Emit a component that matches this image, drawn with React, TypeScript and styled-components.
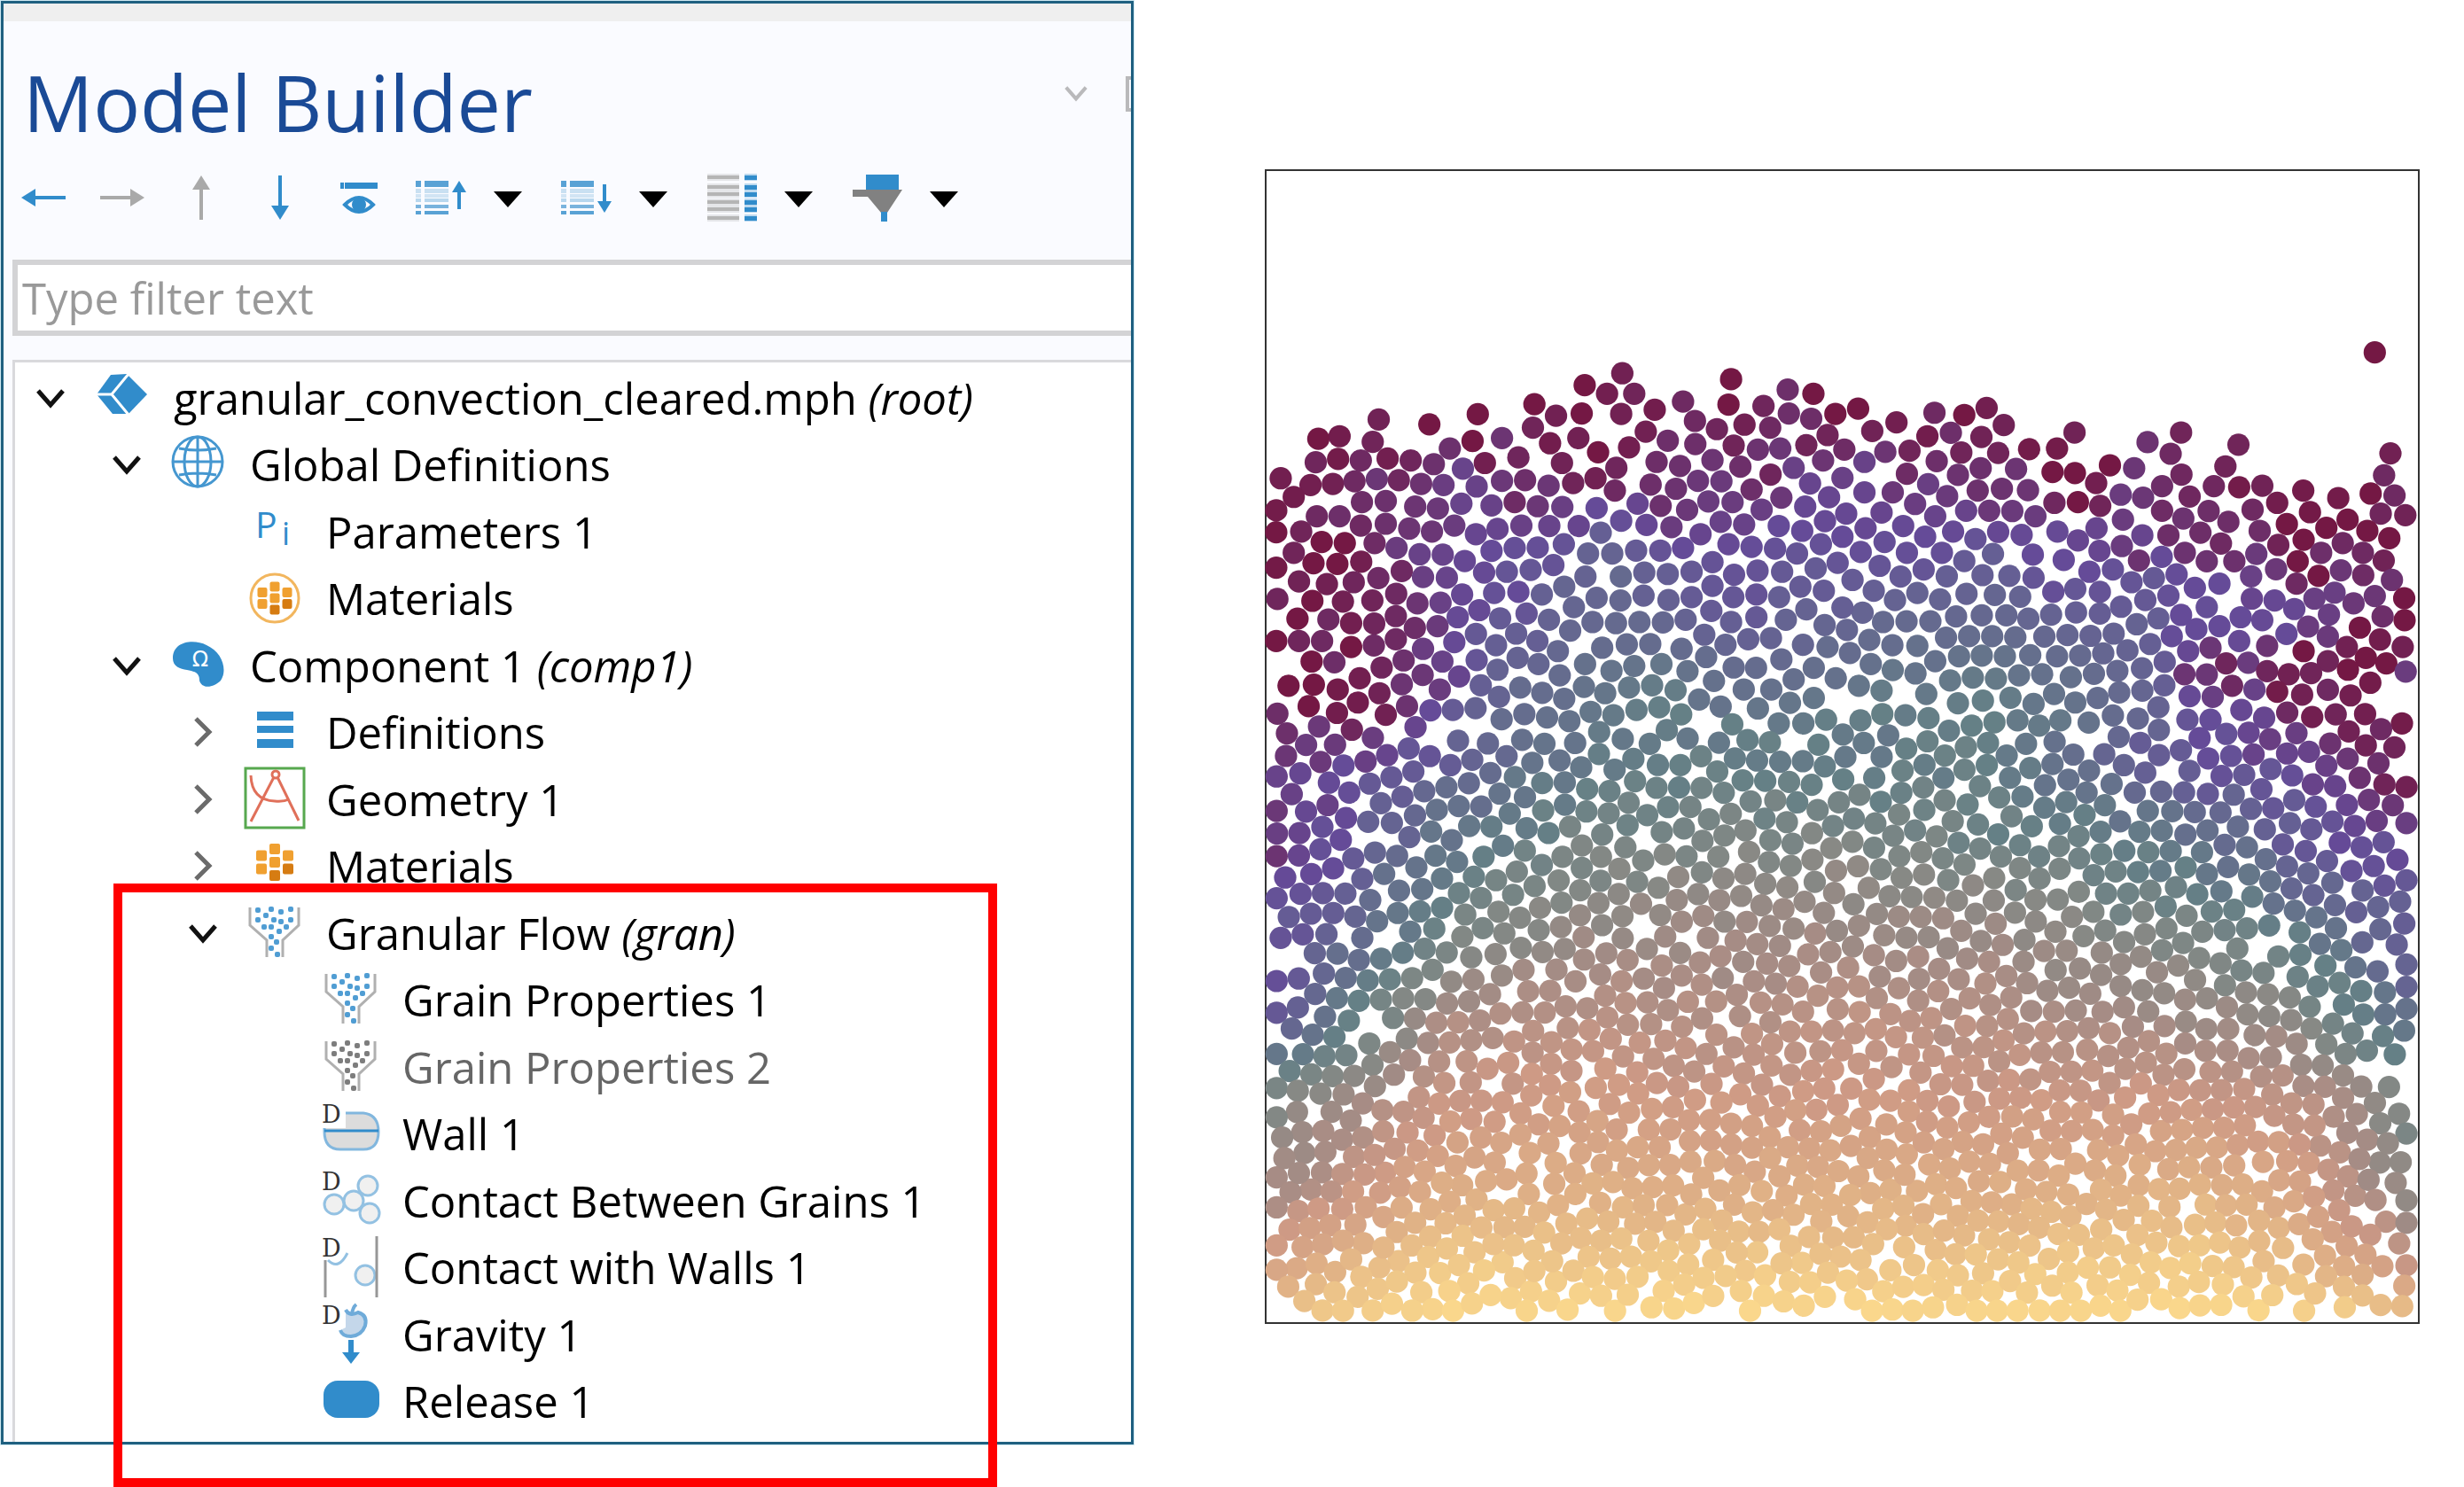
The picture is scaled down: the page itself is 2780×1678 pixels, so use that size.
import React from "react";
import styled, { createGlobalStyle } from "styled-components";

const uiFont = `"Open Sans", "Noto Sans", "Liberation Sans", sans-serif`;
const blue = "#318ccb";
const grey = "#a9a9a9";

const GlobalStyle = createGlobalStyle`
  *, *::before, *::after { box-sizing: border-box; }
  body { margin: 0; background: #ffffff; font-family: ${uiFont}; }
`;

/* ---------- Layout ---------- */

const Page = styled.main`
  position: relative;
  display: grid;
  grid-template-columns: 46fr 54fr;
  align-items: start;
  min-height: 100vh;
  padding: 1px 0 48px 1px;
`;

const Panel = styled.section`
  display: flex;
  flex-direction: column;
  height: calc(100vh - 49px);
  min-height: 1200px;
  overflow: hidden;
  background: #fafbff;
  border: 3px solid #1f6080;
  box-shadow: 0 0 0 1px #cfe8f2;
`;

const TopStrip = styled.div`
  flex: none;
  height: 20px;
  background: #efefef;
`;

const Header = styled.header`
  flex: none;
  display: flex;
  align-items: center;
  justify-content: space-between;
  height: 168px;
  padding-left: 22px;
`;

const Title = styled.h1`
  margin: 0;
  padding-top: 14px;
  font-size: 88px;
  line-height: 120px;
  font-weight: 400;
  color: #1a4a96;
`;

const WindowControls = styled.div`
  display: flex;
  align-items: center;
  gap: 40px;
  padding-bottom: 6px;
`;

const IconButton = styled.button<{ $width: number }>`
  display: flex;
  flex: none;
  align-items: center;
  justify-content: center;
  width: ${(p) => p.$width}px;
  height: 60px;
  padding: 0;
  border: 0;
  background: none;
  cursor: pointer;
`;

const Toolbar = styled.div`
  flex: none;
  display: flex;
  align-items: center;
  height: 62px;
`;

const NavButtons = styled.div`
  display: flex;
  margin-right: 4px;
`;

const SplitButton = styled.div`
  display: flex;
  margin-right: 14px;
`;

const Filter = styled.input`
  flex: none;
  height: 86px;
  margin: 39px 0 27px 10px;
  padding: 0 5px;
  border: 6px solid #d3d3d5;
  border-right: 0;
  border-radius: 0;
  background: #ffffff;
  font-family: ${uiFont};
  font-size: 49px;
  color: #000000;
  outline: none;
  &::placeholder { color: #999999; opacity: 1; }
`;

const Tree = styled.ul`
  flex: 1;
  display: grid;
  grid-auto-rows: 1fr;
  margin: 0 0 0 10px;
  padding: 2px 0 8px;
  list-style: none;
  background: #ffffff;
  border: solid #d9d9dc;
  border-width: 3px 0 0 3px;
`;

const Row = styled.li<{ $depth: number }>`
  display: flex;
  align-items: center;
  min-height: 0;
  padding-left: ${(p) => 12 + p.$depth * 86}px;
`;

const ToggleSlot = styled.span`
  flex: none;
  width: 56px;
  height: 60px;
  margin-right: 15px;
`;

const IconSlot = styled.svg`
  flex: none;
  width: 76px;
  height: 72px;
  margin-right: 20px;
  overflow: visible;
`;

const Label = styled.span<{ $muted?: boolean }>`
  font-size: 49px;
  line-height: 72px;
  white-space: nowrap;
  color: ${(p) => (p.$muted ? "#666666" : "#000000")};
`;

const Highlight = styled.div`
  position: absolute;
  left: 128px;
  top: 997px;
  bottom: 0;
  width: 997px;
  border: 10px solid #ff0000;
  pointer-events: none;
`;

const PlotArea = styled.section`
  padding: 190px 50px 0 148px;
`;

const Plot = styled.svg`
  display: block;
  width: 100%;
  aspect-ratio: 1;
  border: 2px solid #333333;
  overflow: visible;
`;

/* ---------- Toolbar icons ---------- */

const ArrowIcon = ({ angle, color, length }: { angle: number; color: string; length: number }) => (
  <svg width="52" height="52" viewBox="-26 -26 52 52">
    <g transform={`rotate(${angle})`} fill={color}>
      <rect x={-length / 2} y="-2" width={length - 10} height="4" />
      <path d={`M${length / 2} 0 L${length / 2 - 16} -10 V10 Z`} />
    </g>
  </svg>
);

const EyeIcon = () => (
  <svg width="44" height="40" viewBox="0 0 44 40">
    <rect x="1" y="3" width="4" height="7" fill={blue} />
    <rect x="6" y="3" width="37" height="7" fill={blue} />
    <path d="M6 28 Q22 12 38 28 Q22 44 6 28Z" fill="none" stroke={blue} strokeWidth="4" />
    <circle cx="22" cy="28" r="8" fill={blue} />
  </svg>
);

const ListIcon = ({ up }: { up: boolean }) => (
  <svg width="58" height="44" viewBox="0 0 58 44">
    {[[3, 7, 1], [12, 5, 0.3], [18, 4, 0.25], [23, 4, 0.4], [30, 4, 0.8], [37, 4, 1]].map(([y, h, o]) => (
      <g key={y} fill={blue} opacity={o * 0.8}>
        <rect x="0" y={y} width="6" height={h} />
        <rect x="10" y={y} width="27" height={h} />
      </g>
    ))}
    <g transform={up ? undefined : "matrix(1 0 0 -1 0 42)"} fill={blue}>
      <path d="M49 3 L57 16 H41Z" />
      <rect x="47" y="12" width="4" height="23" />
    </g>
  </svg>
);

const ColumnsIcon = () => (
  <svg width="56" height="54" viewBox="0 0 56 54">
    {[1, 12, 20, 29, 37, 47].map((y) => (
      <g key={y}>
        <rect x="0" y={y + 1} width="36" height="4" fill="#b5b5b5" />
        <rect x="0" y={y - 1} width="36" height="8" fill="#b5b5b5" opacity="0.3" />
        <rect x="42" y={y - 1} width="14" height="8" fill={blue} opacity="0.3" />
        <rect x="42" y={y + 1} width="14" height="5" fill={blue} />
      </g>
    ))}
  </svg>
);

const FunnelIcon = () => (
  <svg width="56" height="54" viewBox="0 0 56 54">
    <rect x="15" y="1" width="37" height="20" fill={blue} />
    <path d="M0 18 H56 L39 44 H32 L17 26 H0Z" fill="#818181" />
    <rect x="32" y="43" width="7" height="11" fill={blue} />
  </svg>
);

const Caret = () => (
  <svg width="32" height="24" viewBox="0 0 32 24">
    <path d="M0 5 H32 L16 23Z" fill="#000" />
  </svg>
);

const Chevron = ({ open, color }: { open: boolean; color: string }) => (
  <svg width="40" height="40" viewBox="-20 -20 40 40">
    <path
      d={open ? "M-14 -8 L0 8 L14 -8" : "M-8 -15 L7 0 L-8 15"}
      fill="none"
      stroke={color}
      strokeWidth="5"
    />
  </svg>
);

/* ---------- Tree icons ---------- */

const Badge = () => (
  <text x="5" y="24" fontFamily='"DejaVu Serif", serif' fontSize="27" fill="#333">
    D
  </text>
);

const grains = [
  [19, 10], [34, 9], [45, 12], [56, 9], [28, 16], [19, 21], [37, 21], [45, 23], [56, 21],
  [26, 29], [34, 29], [51, 29], [43, 34], [34, 40], [40, 46], [34, 53], [41, 60],
];

const GrainFunnel = ({ color }: { color: string }) => (
  <>
    <path d="M10 7 V27 L29 44 V63 M65 7 V27 L47 44 V63" fill="none" stroke="#b0b0b0" strokeWidth="3" />
    {grains.map(([x, y]) => (
      <rect key={`${x}-${y}`} x={x - 3} y={y - 3} width="6" height="6" rx="2" fill={color} opacity="0.85" />
    ))}
  </>
);

const Cells = ({ cx, cy, dx, dy, size }: { cx: number; cy: number; dx: number; dy: number; size: number }) => (
  <>
    {[
      [0, -dy, "#f0a030"], [0, 0, "#f0a030"], [0, dy, "#d67c12"],
      [-dx, -dy / 2, "#f0a030"], [-dx, dy / 2, "#f0a030"],
      [dx, -dy / 2, "#f0a030"], [dx, dy / 2, "#d67c12"],
    ].map(([x, y, fill], i) => (
      <rect
        key={i}
        x={cx + Number(x) - size / 2}
        y={cy + Number(y) - size / 2}
        width={size}
        height={size}
        rx="2"
        fill={String(fill)}
      />
    ))}
  </>
);

const ball = { fill: "#f0f0f0", stroke: "#93c1e2", strokeWidth: 3 };

const icons: Record<string, React.ReactNode> = {
  root: (
    <>
      <path d="M9 32 L25 10 L43 9 L66 32 L45 54 H27Z" fill={blue} />
      <path d="M8 32 H26 L45 9 M26 32 L45 55" fill="none" stroke="#fff" strokeWidth="3" />
    </>
  ),
  globe: (
    <g fill="none" stroke={blue} strokeWidth="3" opacity="0.9">
      <circle cx="37" cy="33" r="28" />
      <ellipse cx="37" cy="33" rx="15" ry="28" />
      <path d="M37 5 V61 M9 33 H65 M16 18 Q37 22 58 18 M16 48 Q37 44 58 48" />
    </g>
  ),
  params: (
    <g fill={blue} fontFamily='"Open Sans", sans-serif'>
      <text x="16" y="43" fontSize="41">P</text>
      <text x="46" y="51" fontSize="36">i</text>
    </g>
  ),
  materialsRound: (
    <>
      <circle cx="38" cy="36" r="27" fill="none" stroke="#f2b65e" strokeWidth="3" />
      <Cells cx={38} cy={36} dx={14} dy={13} size={11} />
    </>
  ),
  component: (
    <>
      <path d="M9 28 C9 8 33 6 47 13 C65 21 71 41 63 53 C55 61 42 63 39 53 C39 43 33 43 25 41 C17 40 9 37 9 28Z" fill={blue} />
      <text x="40" y="37" fontSize="24" textAnchor="middle" fontFamily='"DejaVu Sans", sans-serif' fill="#fff">
        Ω
      </text>
    </>
  ),
  definitions: (
    <g fill={blue}>
      <rect x="18" y="13" width="41" height="10" />
      <rect x="18" y="29" width="41" height="8" />
      <rect x="18" y="44" width="41" height="10" />
    </g>
  ),
  geometry: (
    <>
      <rect x="5" y="1" width="66" height="67" fill="#fff" stroke="#57a84f" strokeWidth="3" />
      <g fill="none" stroke="#e0705a" strokeWidth="3">
        <path d="M11 61 L37 11 M41 11 L65 60 M11 9 Q12 37 38 38 Q48 39 54 36" />
        <circle cx="39" cy="8" r="4" />
      </g>
    </>
  ),
  materials: <Cells cx={38} cy={32} dx={15} dy={15} size={12} />,
  grain: <GrainFunnel color={blue} />,
  grainOff: <GrainFunnel color="#666" />,
  wall: (
    <>
      <path d="M32 13 H52 Q69 15 69 34 Q69 54 52 54 H26 Q8 54 8 34 V30 H32Z" fill="#dcdcdc" />
      <path d="M32 13 H52 Q69 15 69 34 Q69 54 52 54 H26 Q8 54 8 34 V30" fill="none" stroke="#82b7de" strokeWidth="3" />
      <path d="M8 33 H69" stroke={blue} strokeWidth="3" />
      <Badge />
    </>
  ),
  contactGrains: (
    <>
      <circle cx="41" cy="36" r="11" {...ball} />
      <circle cx="57" cy="19" r="11" {...ball} />
      <circle cx="19" cy="40" r="11" {...ball} />
      <circle cx="59" cy="50" r="11" {...ball} />
      <Badge />
    </>
  ),
  contactWalls: (
    <>
      <circle cx="54" cy="45" r="11" {...ball} />
      <path d="M12 28 Q24 40 34 20" fill="none" stroke="#93c1e2" strokeWidth="3" />
      <path d="M67 1 V70 M9 28 V70" stroke="#979797" strokeWidth="3" />
      <Badge />
    </>
  ),
  gravity: (
    <>
      <path d="M32 12 Q40 16 46 11 Q57 14 54 26 Q50 38 38 38 Q28 38 26 31 L32 28Z" fill="#c4d7ea" />
      <path d="M32 8 Q36 16 46 11 Q57 14 54 26 Q50 37 38 38 Q28 38 26 31 M39 13 Q40 5 44 2" fill="none" stroke="#6fabd9" strokeWidth="4" />
      <path d="M35 42 H41 V56 H48 L38 69 L28 56 H35Z" fill={blue} />
      <Badge />
    </>
  ),
  release: <rect x="7" y="13" width="63" height="42" rx="16" fill={blue} />,
};

interface Node {
  depth: number;
  icon: string;
  text: string;
  tag?: string;
  state?: "open" | "closed";
  muted?: boolean;
}

const nodes: Node[] = [
  { depth: 0, icon: "root", text: "granular_convection_cleared.mph", tag: "(root)", state: "open" },
  { depth: 1, icon: "globe", text: "Global Definitions", state: "open" },
  { depth: 2, icon: "params", text: "Parameters 1" },
  { depth: 2, icon: "materialsRound", text: "Materials" },
  { depth: 1, icon: "component", text: "Component 1", tag: "(comp1)", state: "open" },
  { depth: 2, icon: "definitions", text: "Definitions", state: "closed" },
  { depth: 2, icon: "geometry", text: "Geometry 1", state: "closed" },
  { depth: 2, icon: "materials", text: "Materials", state: "closed" },
  { depth: 2, icon: "grain", text: "Granular Flow", tag: "(gran)", state: "open" },
  { depth: 3, icon: "grain", text: "Grain Properties 1" },
  { depth: 3, icon: "grainOff", text: "Grain Properties 2", muted: true },
  { depth: 3, icon: "wall", text: "Wall 1" },
  { depth: 3, icon: "contactGrains", text: "Contact Between Grains 1" },
  { depth: 3, icon: "contactWalls", text: "Contact with Walls 1" },
  { depth: 3, icon: "gravity", text: "Gravity 1" },
  { depth: 3, icon: "release", text: "Release 1" },
];

/* ---------- Grain plot ---------- */

const SIZE = 3090;
const RADIUS = 30;

/* Upper grains of each half of the box: x, y, level on the colour scale. */
const upperLeft = `977,571,10.5 876,603,11 936,626,10.6 1009,626,10.3 741,654,11 799,685,10.5 868,679,11 974,680,10.5 1064,669,10.7 1140,647,10 1269,587,11 1262,655,11 1421,615,9.7 1490,626,11 1356,659,10.2 1424,679,9.7 1484,693,9.8 1549,680,11 323,695,10.4 459,708,11 589,681,11 218,740,10.7 161,747,11 307,755,10.3 575,753,11 654,745,9.4 737,717,10.3 783,759,10.7 859,745,10.5 1040,728,10.5 1099,752,9.7 1172,699,10 1231,721,10.2 1305,709,10.5 1374,717,10 1528,737,10.3 514,773,9.6 698,797,10.2 912,783,11 995,770,10.6 1173,761,9.7 1276,765,10.3 1341,776,9.5 1401,773,9.3 1471,764,10.3 154,810,10.2 214,801,10.8 275,805,10 347,800,10.6 409,805,10.2 471,815,9.6 549,827,8.5 608,812,10.6 815,812,10.4 961,825,10.2 1069,809,9.8 1132,820,9.6 1219,804,9.4 1294,822,9.7 1375,843,10.2 1437,825,8.7 1516,805,9.4 60,853,10.6 140,871,10.6 200,868,10.5 258,861,10 318,855,9.3 377,858,10.1 437,868,9.5 497,871,8.9 586,875,8.6 654,860,9.2 716,858,9.7 779,873,9.3 845,866,10.3 905,853,10.5 957,886,10 1053,870,9.7 1121,881,9.5 1180,860,9.2 1243,861,9.1 1324,883,9.7 1481,867,8.4 95,903,10.7 48,939,10.8 48,998,11 278,917,9.8 342,914,9.6 157,955,10 218,955,9.7 421,929,9.4 482,934,9.2 545,921,8.5 626,926,8.6 688,917,9.9 750,928,9.3 816,930,8.8 908,933,8 1018,921,8.3 1080,927,9.6 1151,938,9.2 1208,915,9 1273,917,9 1351,937,8.8 1404,905,9.2 1468,929,8.2 1532,904,8.3 275,980,10 342,975,9.6 405,988,9.4 466,996,9.3 526,980,9 584,1003,8.3 642,989,8.4 706,980,8.7 781,981,8.5 860,981,8.4 919,999,7 974,967,7.8 1042,978,8.2 1109,984,9 1187,1003,8.4 1241,970,8.6 1304,977,8.6 1397,981,8 1460,994,8 1521,968,8.1 115,996,10.3 170,1024,11 232,1027,11 312,1027,9.9 95,1053,10.3 371,1040,9 433,1057,8.6 495,1058,8.5 554,1075,8.2 626,1048,8 688,1040,7.8 750,1039,7.8 820,1030,7.6 885,1055,6.8 950,1055,6.7 1014,1047,7.2 1079,1047,7.6 1140,1040,8 1262,1030,8.1 1324,1037,7.9 1387,1042,7.7 1446,1055,7.5 1510,1030,7.7 48,1093,10.9 148,1081,11 212,1083,11 276,1077,10.6 385,1102,10 442,1118,8.8 506,1120,8.5 606,1106,8.1 667,1104,7.5 731,1099,7.4 792,1086,7.6 878,1117,6.8 973,1117,6.4 1036,1106,6.9 1099,1110,7 1163,1104,7.3 1219,1078,7.6 1277,1112,7.6 1340,1101,7.6 1406,1104,7.3 1496,1095,7.2 1555,1080,7.5 109,1130,10.4 184,1137,10.5 256,1132,10.2 322,1121,9.9 51,1177,10.2 145,1182,11 227,1184,10.5 306,1181,10.3 370,1163,10 427,1189,9.4 489,1187,8.7 547,1165,8.2 633,1161,7.7 698,1158,8 761,1165,6.9 821,1144,6.6 847,1199,6.6 908,1174,6.6 972,1181,6.5 1034,1168,6.9 1101,1180,6.9 1163,1172,7.2 1219,1142,7.4 1275,1172,7.4 1337,1165,7.6 1398,1172,7 1455,1144,7.2 1518,1155,7.2 105,1230,11 188,1232,10 249,1242,10.6 311,1243,10.2 369,1223,10 420,1255,9.8 481,1250,9.1 535,1226,8.1 593,1207,8.1 649,1229,7.2 720,1216,7.5 780,1233,6.8 837,1262,6.5 897,1239,6.5 960,1242,6.4 1023,1239,6.4 1086,1240,6.5 1147,1233,6.8 1216,1209,7.2 1269,1239,7 1337,1226,7.3 1416,1233,6.7 1471,1205,6.8 1520,1247,6.6 48,1290,11 109,1290,10.2 171,1290,10 249,1306,11 310,1302,9.9 369,1285,10 442,1311,8.9 526,1293,8.1 584,1271,7.3 638,1301,7 692,1270,7 749,1290,7 804,1317,6.5 923,1308,6.3 989,1299,6.3 1052,1298,6.3 1136,1311,6.3 1197,1273,6.8 1254,1300,6.6 1315,1285,6.9 1376,1282,6.8 1462,1300,6.6 1528,1306,6.2 143,1345,11 204,1347,9.8 331,1361,10.2 390,1342,9.6 494,1345,8.6 586,1341,7.5 642,1367,6.8 696,1335,6.8 752,1352,6.6 809,1382,6.3 877,1352,6 948,1370,5.8 1009,1357,5.8 1082,1352,5.6 1152,1371,5.9 1202,1333,6.2 1276,1361,6.3 1336,1362,6.3 1404,1339,6.4 1491,1362,6.1 81,1410,11 149,1407,11 213,1420,10.8 272,1390,10.6 325,1430,10.4 385,1406,9.4 441,1381,9.3 539,1385,8.4 597,1409,7 487,1420,9 646,1440,6.7 703,1415,6.3 762,1429,6.2 821,1445,6.1 874,1413,5.9 931,1430,5.7 995,1415,5.5 1057,1409,5.3 1120,1422,5.2 1183,1447,5.8 1223,1397,6 1303,1420,6 1377,1420,6 1437,1393,6.1 1491,1443,5.6 1550,1390,6 135,1465,11 51,1485,9.8 267,1455,10.7 211,1483,10.7 342,1488,10.5 399,1465,9.5 462,1476,8 522,1475,7.2 583,1470,6.8 653,1500,6.2 714,1486,6.2 775,1495,6 835,1505,5.9 892,1480,5.6 953,1489,5.4 1015,1475,5.2 1076,1468,5.1 1135,1487,5 1241,1466,5.9 1341,1471,5.7 1427,1456,5.7 1397,1511,5.5 1463,1511,5.4 1524,1501,5.1`;

const upperRight = `1429,515,11 42,666,11 145,703,10.6 80,726,10.4 247,677,10 327,683,11 387,664,10.6 433,710,10.4 228,740,10.7 291,731,9.7 373,742,10.4 501,775,10.8 576,773,10.8 623,730,10.4 718,818,11 819,756,9.5 909,730,10.3 1063,763,10.3 881,787,10 1028,821,10.3 1471,786,10.5 1454,845,10 5,776,9.9 59,809,8.6 115,782,9.4 180,779,10.3 253,807,9.7 319,784,10.3 418,785,10.3 173,841,9.9 310,844,9.5 371,826,9.6 466,828,9.4 564,836,11 624,839,11 681,866,10.6 783,826,9.3 910,843,10.1 858,874,9.8 997,874,10.1 1065,877,10.8 1127,873,10.4 1237,886,10.8 1167,919,10.7 1331,906,10.8 1418,894,11 1482,899,10 0,852,8.7 59,891,8.4 135,891,9.2 230,869,8.8 281,901,9.1 363,886,9.6 428,881,9.5 498,885,9.4 569,919,10.1 632,917,11 692,927,10.3 747,897,9 807,905,9.3 932,902,10.1 858,940,9.9 983,941,9.8 1101,937,10 1255,944,10.9 1356,964,11 1445,948,10.2 1511,952,10.4 195,922,8.9 105,945,8.4 10,948,8.2 249,955,8.5 332,940,8.5 394,940,9.2 456,941,9.1 518,955,9 753,964,9 915,961,9.5 1036,970,9.8 1193,976,11 1299,986,11 1409,994,11 1468,1014,11 62,987,8.2 163,981,8.1 682,987,8.4 577,996,8.1 632,1020,8.3 805,1006,8.4 875,1006,9.8 961,999,9.8 1120,994,9.8 1238,1018,11 1343,1027,10 1397,1053,10 222,1010,8 297,996,8.1 357,1016,7.6 418,997,8.2 481,1005,8.1 113,1024,7.8 0,1010,8 1016,1028,10 1170,1032,10.4 750,1035,9 690,1048,8.3 919,1053,9.5 1111,1056,9.1 1285,1053,9.7 1453,1074,10.4 1222,1076,11 49,1051,7.8 173,1053,7.8 267,1053,7.8 404,1056,7 511,1058,8 594,1072,8 796,1074,9.5 857,1064,8 978,1076,9.5 1052,1076,9.6 327,1075,7.2 100,1088,7.5 218,1098,7.5 726,1098,7.7 663,1104,8 1338,1100,9.3 1164,1097,9.2 1278,1115,11 1398,1113,9.9 1475,1126,9.5 27,1126,7.2 156,1117,7.2 280,1116,7 376,1113,7 448,1115,7 513,1120,7.5 776,1132,7.5 836,1121,7.3 897,1111,7.9 946,1147,8 1012,1136,8 1097,1116,8.7 1219,1136,10 84,1155,7 201,1161,6.8 333,1163,6.8 566,1158,7.8 625,1150,7.4 691,1158,7.6 1321,1160,8.8 1429,1169,9.3 1508,1175,11 141,1180,6.8 262,1178,6.7 409,1166,6.6 477,1171,6.7 813,1180,7.3 875,1168,7.7 1099,1176,8.4 1160,1181,8.2 1267,1176,8.8 748,1198,7.2 978,1199,7.8 1213,1204,8.2 1372,1189,9.2 54,1214,6.7 1450,1224,9.7 1509,1234,11 0,1200,7 305,1224,6.5 374,1221,6.5 440,1221,6.5 499,1230,6.6 560,1219,6.8 627,1213,7 691,1216,7.1 848,1229,7 909,1220,8 1069,1226,8 1127,1234,8.1 1306,1219,8.8 109,1239,6.4 172,1237,6.4 236,1237,6.4 790,1245,6.8 950,1258,8 1012,1250,8 1250,1251,9 1389,1254,11 12,1260,6.6 72,1287,6.3 278,1281,6.3 340,1277,6.2 402,1277,6.2 464,1280,6.3 542,1278,6.5 604,1274,6.6 666,1276,6.8 728,1270,6.8 884,1277,7.9 1192,1271,8 1303,1278,9.1 1443,1286,10.7 134,1301,6.2 201,1303,6 826,1298,7 765,1315,6.8 988,1308,9.3 1065,1290,8.1 1140,1303,9.4 1354,1306,10.5 1504,1306,10.5 928,1317,8.2 1238,1317,11 20,1322,6.3 313,1331,5.9 374,1329,5.8 436,1331,5.9 504,1328,6.1 576,1331,6.3 638,1329,6.4 700,1323,6.6 249,1344,6 76,1352,6 135,1368,5.6 196,1377,5.8 865,1346,7.2 804,1363,6.7 738,1370,6.5 675,1378,6.3 613,1387,6 536,1379,6 474,1382,5.8 412,1391,5.4 350,1388,5.4 289,1396,5.5 1030,1350,10.2 1089,1348,9 1405,1335,11 1303,1344,10.3 1460,1350,11 1357,1367,11 1512,1372,9 1140,1371,10.2 1258,1376,10.3 1198,1379,10.5 978,1380,9.3 918,1379,9.4 44,1410,5.7 105,1423,5.3 225,1432,5.5 864,1409,7 805,1423,6.6 743,1428,6.4 1046,1410,10 1417,1402,10.8 1106,1420,8.6 1167,1426,10.8 1303,1421,10 1234,1434,10.5 1364,1436,10.6 932,1438,8.1 994,1440,8.8 568,1432,5.8 685,1443,6.2 625,1455,5.9 451,1442,5.3 377,1450,5.1 310,1457,5.2 513,1459,5.6 848,1468,6.8 1071,1475,8.2 1194,1482,10 1403,1486,10.6 1324,1487,10.3 1132,1496,8.3 1261,1494,10.6 107,1486,5 169,1489,5.3 231,1497,5.1 726,1490,6.3 793,1498,6.5 585,1503,5.5 661,1509,5.9 470,1503,5.4 408,1508,5 347,1517,5 926,1501,7.5 988,1501,7.9 1502,1511,10.8`;

/* Colour scale, from slow (bottom) to fast (top). */
const scale = [
  [251, 217, 140], [223, 176, 134], [205, 153, 133], [166, 140, 133], [130, 136, 133], [101, 128, 134],
  [101, 113, 140], [101, 95, 148], [101, 75, 152], [106, 60, 126], [110, 42, 98], [116, 24, 68],
];

/* Scale level sampled over the box, in 1300-unit coordinates. */
const gridX = [0, 100, 200, 350, 500, 650, 800, 950, 1050, 1150, 1230, 1300];
const gridY = [500, 600, 680, 760, 860, 960, 1050, 1150, 1230, 1300];
const levels = [
  [10.7, 10.3, 8.4, 6.5, 6.3, 6.8, 6.3, 7, 8, 8.6, 10, 11],
  [9.8, 11, 8.3, 6, 5.3, 5.7, 5.2, 6.3, 8, 10.2, 11, 10.8],
  [9, 8, 6.6, 5.3, 5, 5, 5, 6.3, 7.3, 7.8, 9.7, 10.5],
  [9.5, 7.3, 5.7, 4.4, 4.1, 4, 4.5, 5, 5.6, 7, 7.8, 8.2],
  [7.6, 6.3, 4.4, 3.4, 3.3, 3.2, 3.3, 4, 4.2, 5.2, 6.2, 7.2],
  [7.8, 5, 2.9, 2.4, 2.7, 2.4, 2.6, 2.9, 3.2, 3.5, 4.8, 6.3],
  [4, 3.1, 2.1, 1.8, 2, 1.9, 2, 2, 2, 2.3, 3.1, 4.6],
  [3.2, 2, 1.1, 1, 1.1, 1.1, 1.1, 1, 0.9, 1.3, 2.6, 4],
  [1.7, 0.8, 0.35, 0.5, 0.4, 0.5, 0.5, 0.4, 0.35, 0.7, 1.4, 2.3],
  [0.4, 0.2, 0, 0, 0, 0, 0, 0, 0, 0, 0.1, 0.3],
];

/* Loose pockets in the bed: x, y, radius. */
const voids = [
  [30, 1640, 40], [260, 1800, 80], [40, 2330, 80], [250, 2300, 60], [840, 2430, 60], [1220, 2445, 50],
  [3060, 1560, 60], [2680, 2080, 100], [2980, 2420, 90], [2300, 1800, 70], [2720, 2440, 50],
  [1660, 2530, 70], [2010, 2910, 50], [2880, 2030, 80], [680, 1900, 60], [1000, 1780, 70], [1650, 1620, 70],
  [120, 2150, 60], [340, 1880, 50], [990, 3010, 46], [1740, 3040, 40], [2760, 2940, 50], [60, 3060, 50],
  [500, 2400, 50], [700, 2240, 50], [360, 2480, 50], [340, 2760, 40], [2960, 2800, 40], [3070, 3060, 40],
  [780, 2700, 40], [1290, 2600, 40], [1280, 2720, 40], [2440, 2760, 40], [2040, 2430, 40], [1770, 2380, 50],
];

const locate = (axis: number[], v: number): [number, number] => {
  let i = 0;
  while (i < axis.length - 2 && v > axis[i + 1]) i++;
  const f = (v - axis[i]) / (axis[i + 1] - axis[i]);
  return [i, Math.max(0, Math.min(1, f))];
};

const levelAt = (x: number, y: number) => {
  const [i, fx] = locate(gridX, (x / SIZE) * 1300);
  const [j, fy] = locate(gridY, (y / SIZE) * 1300);
  const top = levels[j][i] * (1 - fx) + levels[j][i + 1] * fx;
  const bottom = levels[j + 1][i] * (1 - fx) + levels[j + 1][i + 1] * fx;
  return top * (1 - fy) + bottom * fy;
};

const colorOf = (level: number) => {
  const v = Math.max(0, Math.min(scale.length - 1, level));
  const i = Math.min(scale.length - 2, Math.floor(v));
  const mix = scale[i].map((c, k) => Math.round(c + (scale[i + 1][k] - c) * (v - i)));
  return `rgb(${mix.join(",")})`;
};

const spacingAt = (y: number) => {
  const [i, f] = locate([1300, 2150, 2500, 2800, 3090], y);
  const d = [61, 60, 57, 55, 55];
  return d[i] + (d[i + 1] - d[i]) * f;
};

interface Grain {
  x: number;
  y: number;
  level: number;
  fixed: boolean;
}

const parse = (data: string, originX: number): Grain[] =>
  data.split(" ").map((item) => {
    const [x, y, level] = item.split(",").map(Number);
    return { x: x + originX, y: y - 28, level, fixed: true };
  });

const FILL_TOP = 1495;

const buildGrains = (): Grain[] => {
  let seed = 20231;
  const random = () => {
    seed = (seed * 1664525 + 1013904223) % 4294967296;
    return seed / 4294967296;
  };
  const all: Grain[] = [...parse(upperLeft, -22), ...parse(upperRight, 1546)];
  const fixedCount = all.length;

  let shift = false;
  for (let y = FILL_TOP; y < 3075; ) {
    const d = spacingAt(y) * 1.05;
    for (let x = shift ? 27 + d / 2 : 27; x < SIZE - 24; x += d) {
      const px = x + (random() - 0.5) * d * 1.1;
      const py = y + (random() - 0.5) * d * 1.1 + Math.sin(x / 260) * 14;
      const clear = all.slice(0, fixedCount).every((g) => Math.hypot(g.x - px, g.y - py) > 44);
      const inVoid = voids.some(([vx, vy, r]) => Math.hypot(vx - px, vy - py) < r * 0.6);
      if (clear && !inVoid) all.push({ x: px, y: py, level: 0, fixed: false });
    }
    shift = !shift;
    y += d * 0.866;
  }

  const cell = 70;
  for (let step = 0; step < 45; step++) {
    const cells = new Map<number, number[]>();
    all.forEach((g, i) => {
      const key = Math.floor(g.x / cell) * 1000 + Math.floor(g.y / cell);
      const list = cells.get(key);
      if (list) list.push(i);
      else cells.set(key, [i]);
    });
    all.forEach((a, i) => {
      const cx = Math.floor(a.x / cell);
      const cy = Math.floor(a.y / cell);
      for (let ix = cx - 1; ix <= cx + 1; ix++) {
        for (let iy = cy - 1; iy <= cy + 1; iy++) {
          for (const j of cells.get(ix * 1000 + iy) ?? []) {
            const b = all[j];
            if (j <= i || (a.fixed && b.fixed)) continue;
            const dx = b.x - a.x;
            const dy = b.y - a.y;
            const dist = Math.hypot(dx, dy) || 1;
            const gap = spacingAt((a.y + b.y) / 2) - dist;
            if (gap <= 0) continue;
            const push = (gap / dist) * 0.45;
            if (!a.fixed) {
              a.x -= dx * push;
              a.y -= dy * push;
            }
            if (!b.fixed) {
              b.x += dx * push;
              b.y += dy * push;
            }
          }
        }
      }
    });
    all.forEach((g) => {
      if (g.fixed) return;
      g.x = Math.max(27, Math.min(SIZE - 30, g.x));
      g.y = Math.max(FILL_TOP - 20, Math.min(SIZE - 30, g.y));
    });
  }

  all.forEach((g) => {
    if (g.fixed) return;
    const base = levelAt(g.x, g.y);
    g.level = base + (random() - 0.5) * Math.min(1.4, 0.1 + base * 0.12);
  });
  return all;
};

const grainField = buildGrains();

/* ---------- App ---------- */

export default function App() {
  return (
    <>
      <GlobalStyle />
      <Page>
        <Panel>
          <TopStrip />
          <Header>
            <Title>Model Builder</Title>
            <WindowControls>
              <IconButton $width={32} aria-label="Panel menu">
                <Chevron open color="#b9b9bb" />
              </IconButton>
              <svg width="6" height="42" viewBox="0 0 6 42">
                <path d="M6 4 H2 V40 H6" fill="none" stroke="#b9b9bb" strokeWidth="4" />
              </svg>
            </WindowControls>
          </Header>
          <Toolbar role="toolbar" aria-label="Model Builder tools">
            <NavButtons>
              <IconButton $width={89} aria-label="Back"><ArrowIcon angle={180} color={blue} length={50} /></IconButton>
              <IconButton $width={89} aria-label="Forward"><ArrowIcon angle={0} color={grey} length={50} /></IconButton>
              <IconButton $width={89} aria-label="Move up"><ArrowIcon angle={270} color={grey} length={50} /></IconButton>
              <IconButton $width={89} aria-label="Move down"><ArrowIcon angle={90} color={blue} length={50} /></IconButton>
              <IconButton $width={89} aria-label="Show"><EyeIcon /></IconButton>
            </NavButtons>
            {[
              ["Collapse", <ListIcon up />],
              ["Expand", <ListIcon up={false} />],
              ["Columns", <ColumnsIcon />],
              ["Filter", <FunnelIcon />],
            ].map(([name, icon]) => (
              <SplitButton key={String(name)}>
                <IconButton $width={90} aria-label={String(name)}>{icon}</IconButton>
                <IconButton $width={60} aria-label={`${name} options`}><Caret /></IconButton>
              </SplitButton>
            ))}
          </Toolbar>
          <Filter type="text" placeholder="Type filter text" aria-label="Type filter text" />
          <Tree>
            {nodes.map((node, i) => (
              <Row key={i} $depth={node.depth}>
                <ToggleSlot>
                  {node.state && (
                    <IconButton $width={56} aria-label={`Toggle ${node.text}`} aria-expanded={node.state === "open"}>
                      <Chevron open={node.state === "open"} color={node.state === "open" ? "#111111" : "#6b6b6b"} />
                    </IconButton>
                  )}
                </ToggleSlot>
                <IconSlot viewBox="0 0 76 72" aria-hidden="true">{icons[node.icon]}</IconSlot>
                <Label $muted={node.muted}>
                  {node.text}
                  {node.tag && <em> {node.tag}</em>}
                </Label>
              </Row>
            ))}
          </Tree>
        </Panel>
        <PlotArea>
          <Plot viewBox={`0 0 ${SIZE} ${SIZE}`} role="img" aria-label="Grain positions">
            {grainField.map((g, i) => (
              <circle key={i} cx={g.x.toFixed(1)} cy={g.y.toFixed(1)} r={RADIUS} fill={colorOf(g.level)} />
            ))}
          </Plot>
        </PlotArea>
        <Highlight />
      </Page>
    </>
  );
}
